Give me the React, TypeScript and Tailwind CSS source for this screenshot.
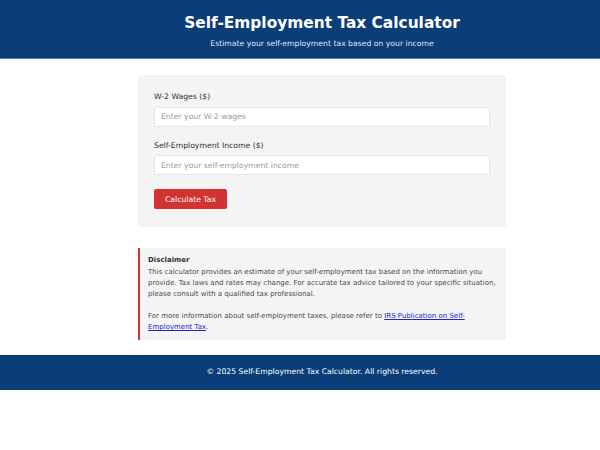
import React from "react";

export default function App() {
  const font = { fontFamily: '"DejaVu Sans", Verdana, sans-serif' };
  return (
    <div className="w-full overflow-hidden bg-white" style={font}>
      <div className="w-[644px]">
        <header className="bg-[#0b3d78] h-[59px] flex flex-col items-center text-white border-b border-[#5b7fb0]">
          <h1 className="text-[15.4px] font-bold leading-none mt-[16px]">Self-Employment Tax Calculator</h1>
          <p className="text-[7.7px] leading-none mt-[9px] text-[#dfe7f1]">Estimate your self-employment tax based on your income</p>
        </header>

        <main className="flex flex-col items-center pt-[16px] pb-[15px]">
          <div className="w-[368px] bg-[#f4f4f4] rounded-[3px] px-[16px] pt-[16px] pb-[18px]">
            <label className="block text-[7.7px] text-[#333] leading-none mt-[2px] mb-[6px]">W-2 Wages ($)</label>
            <input
              className="block w-full h-[20px] bg-white border border-[#e6e6e6] rounded-[2px] px-[6px] text-[7.7px] placeholder:text-[#9a9a9a] outline-none"
              placeholder="Enter your W-2 wages"
            />
            <label className="block text-[7.7px] text-[#333] leading-none mt-[15px] mb-[6px]">Self-Employment Income ($)</label>
            <input
              className="block w-full h-[20px] bg-white border border-[#e6e6e6] rounded-[2px] px-[6px] text-[7.7px] placeholder:text-[#9a9a9a] outline-none"
              placeholder="Enter your self-employment income"
            />
            <button className="mt-[14px] h-[20px] w-[73px] bg-[#d33232] text-white text-[7.7px] rounded-[2px]">Calculate Tax</button>
          </div>

          <div className="w-[368px] mt-[21px] bg-[#f4f4f4] border-l-2 border-[#d33232] pl-[8px] pr-[10px] pt-[7px] pb-[6px] text-[7px] leading-[11.3px] text-[#4a4a4a]">
            <p className="font-bold text-[#333]">Disclaimer</p>
            <p>
              This calculator provides an estimate of your self-employment tax based on the information you provide. Tax laws and rates may change. For accurate tax advice tailored to your specific situation, please consult with a qualified tax professional.
            </p>
            <p className="mt-[10.5px]">
              For more information about self-employment taxes, please refer to{" "}
              <a href="#" className="text-[#2424c4] underline">IRS Publication on Self-Employment Tax</a>.
            </p>
          </div>
        </main>

        <footer className="bg-[#0b3d78] h-[35px] flex items-center justify-center text-white text-[7.7px]">
          © 2025 Self-Employment Tax Calculator. All rights reserved.
        </footer>
      </div>
    </div>
  );
}
